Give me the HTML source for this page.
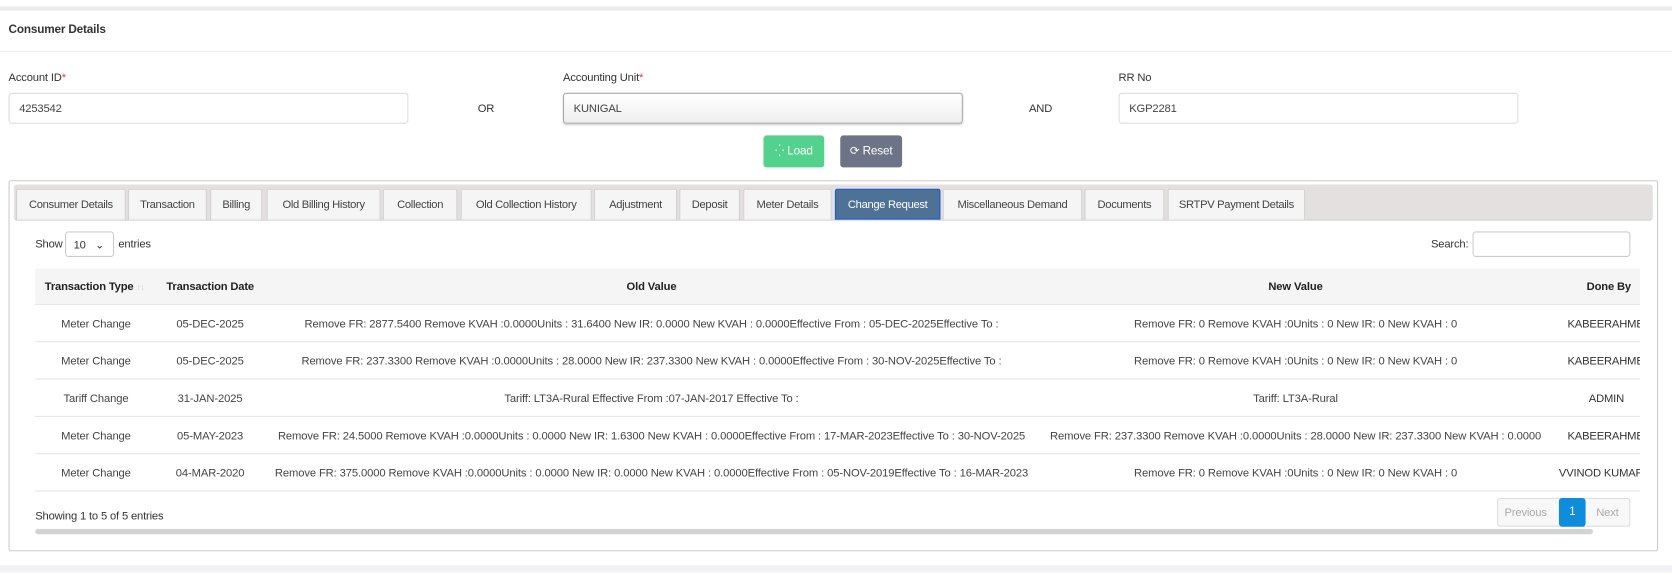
<!DOCTYPE html>
<html><head><meta charset="utf-8"><style>
*{box-sizing:border-box;margin:0;padding:0}
body{width:1672px;height:574px;background:#fff;font-family:"Liberation Sans",sans-serif;font-size:10.5px;letter-spacing:-0.15px;color:#333;position:relative;overflow:hidden}
#w{position:absolute;left:0;top:0;width:1568px;height:539px;transform:scale(1.0663);transform-origin:0 0}
.a{position:absolute;white-space:nowrap}
.inp{position:absolute;border:1px solid #ddd;border-radius:3px;height:29px;top:87px;padding:8px 9px;font-size:10.5px;color:#444}
.tab{position:absolute;top:177px;height:29px;background:#f5f5f5;border:1px solid #d0d0d0;border-bottom:none;border-radius:2px 2px 0 0;font-size:10.5px;letter-spacing:-0.3px;color:#444;text-align:center;line-height:28px}
.c{position:absolute;text-align:center;white-space:nowrap;font-size:10.5px;letter-spacing:-0.1px;color:#444}
.row{position:absolute;left:33px;width:1505px;height:35px;border-bottom:1px solid #e5e5e5}
</style></head><body><div id="w">
<div class="a" style="left:0;top:6px;width:1672px;height:4px;background:#ececec"></div>
<div class="a" style="left:8px;top:22px;font-weight:bold;font-size:11px">Consumer Details</div>
<div class="a" style="left:0;top:48px;width:1672px;height:1px;background:#ececec"></div>
<div class="a" style="left:8px;top:67px">Account ID<span style="color:#e33">*</span></div>
<div class="a" style="left:528px;top:67px">Accounting Unit<span style="color:#e33">*</span></div>
<div class="a" style="left:1049px;top:67px">RR No</div>
<div class="inp" style="left:8px;width:375px">4253542</div>
<div class="inp" style="left:528px;width:375px;border-color:#aaa;background:linear-gradient(#fff,#eee);box-shadow:0 1px 2px #ccc">KUNIGAL</div>
<div class="inp" style="left:1049px;width:375px">KGP2281</div>
<div class="a" style="left:448px;top:96px">OR</div>
<div class="a" style="left:965px;top:96px">AND</div>
<div class="a" style="left:716px;top:127px;width:57px;height:30px;background:#52d28c;border-radius:3px;color:#fff;text-align:center;line-height:30px;font-size:11px">⁛ Load</div>
<div class="a" style="left:788px;top:127px;width:58px;height:30px;background:#6e7488;border-radius:3px;color:#fff;text-align:center;line-height:30px;font-size:11px">⟳ Reset</div>
<div class="a" style="left:8px;top:169px;width:1547px;height:348px;border:1px solid #ccc;border-radius:2px"></div>
<div class="a" style="left:13px;top:173px;width:1537px;height:34px;background:#e3e0df;border-bottom:1px solid #ccc;border-radius:3px"></div>
<div class="tab" style="left:15px;width:103px">Consumer Details</div>
<div class="tab" style="left:120px;width:74px">Transaction</div>
<div class="tab" style="left:197px;width:49px">Billing</div>
<div class="tab" style="left:250px;width:107px">Old Billing History</div>
<div class="tab" style="left:359px;width:70px">Collection</div>
<div class="tab" style="left:432px;width:123px">Old Collection History</div>
<div class="tab" style="left:557px;width:78px">Adjustment</div>
<div class="tab" style="left:637px;width:57px">Deposit</div>
<div class="tab" style="left:697px;width:83px">Meter Details</div>
<div class="tab" style="left:783px;width:99px;background:#4e7196;border:1px solid #1a55e0;color:#fff">Change Request</div>
<div class="tab" style="left:884px;width:131px">Miscellaneous Demand</div>
<div class="tab" style="left:1017px;width:75px">Documents</div>
<div class="tab" style="left:1095px;width:129px">SRTPV Payment Details</div>
<div class="a" style="left:33px;top:223px">Show</div>
<div class="a" style="left:61px;top:217px;width:46px;height:24px;border:1px solid #ccc;border-radius:3px;padding:6px 7px">10 <span style="margin-left:6px">⌄</span></div>
<div class="a" style="left:111px;top:223px">entries</div>
<div class="a" style="left:1342px;top:223px">Search:</div>
<div class="a" style="left:1381px;top:217px;width:148px;height:24px;border:1px solid #ccc;border-radius:3px"></div>
<div class="a" style="left:33px;top:252px;width:1505px;height:34px;background:#f5f5f5;border-bottom:1px solid #e5e5e5"></div>
<div class="a" style="left:42px;top:263px;font-weight:bold;color:#222">Transaction Type <span style="color:#ccc;font-weight:normal;font-size:8px">↑↓</span></div>
<div class="a" style="left:156px;top:263px;font-weight:bold;color:#222">Transaction Date</div>
<div class="c" style="left:511px;width:200px;top:263px;font-weight:bold;color:#222">Old Value</div>
<div class="c" style="left:1115px;width:200px;top:263px;font-weight:bold;color:#222">New Value</div>
<div class="a" style="left:1488px;top:263px;font-weight:bold;color:#222">Done By</div>
<div class="row" style="top:286px"></div><div class="row" style="top:321px"></div><div class="row" style="top:356px"></div><div class="row" style="top:391px"></div><div class="row" style="top:426px"></div>
<div style="position:absolute;left:0;top:0;width:1538px;height:539px;overflow:hidden">
<div class="c" style="left:40px;width:100px;top:298px">Meter Change</div><div class="c" style="left:147px;width:100px;top:298px">05-DEC-2025</div>
<div class="c" style="left:211px;width:800px;top:298px">Remove FR: 2877.5400 Remove KVAH :0.0000Units : 31.6400 New IR: 0.0000 New KVAH : 0.0000Effective From : 05-DEC-2025Effective To :</div>
<div class="c" style="left:965px;width:500px;top:298px">Remove FR: 0 Remove KVAH :0Units : 0 New IR: 0 New KVAH : 0</div>
<div class="a" style="left:1470px;top:298px">KABEERAHMED</div>
<div class="c" style="left:40px;width:100px;top:333px">Meter Change</div><div class="c" style="left:147px;width:100px;top:333px">05-DEC-2025</div>
<div class="c" style="left:211px;width:800px;top:333px">Remove FR: 237.3300 Remove KVAH :0.0000Units : 28.0000 New IR: 237.3300 New KVAH : 0.0000Effective From : 30-NOV-2025Effective To :</div>
<div class="c" style="left:965px;width:500px;top:333px">Remove FR: 0 Remove KVAH :0Units : 0 New IR: 0 New KVAH : 0</div>
<div class="a" style="left:1470px;top:333px">KABEERAHMED</div>
<div class="c" style="left:40px;width:100px;top:368px">Tariff Change</div><div class="c" style="left:147px;width:100px;top:368px">31-JAN-2025</div>
<div class="c" style="left:211px;width:800px;top:368px">Tariff: LT3A-Rural Effective From :07-JAN-2017 Effective To :</div>
<div class="c" style="left:965px;width:500px;top:368px">Tariff: LT3A-Rural</div>
<div class="a" style="left:1490px;top:368px">ADMIN</div>
<div class="c" style="left:40px;width:100px;top:403px">Meter Change</div><div class="c" style="left:147px;width:100px;top:403px">05-MAY-2023</div>
<div class="c" style="left:211px;width:800px;top:403px">Remove FR: 24.5000 Remove KVAH :0.0000Units : 0.0000 New IR: 1.6300 New KVAH : 0.0000Effective From : 17-MAR-2023Effective To : 30-NOV-2025</div>
<div class="c" style="left:965px;width:500px;top:403px">Remove FR: 237.3300 Remove KVAH :0.0000Units : 28.0000 New IR: 237.3300 New KVAH : 0.0000</div>
<div class="a" style="left:1470px;top:403px">KABEERAHMED</div>
<div class="c" style="left:40px;width:100px;top:438px">Meter Change</div><div class="c" style="left:147px;width:100px;top:438px">04-MAR-2020</div>
<div class="c" style="left:211px;width:800px;top:438px">Remove FR: 375.0000 Remove KVAH :0.0000Units : 0.0000 New IR: 0.0000 New KVAH : 0.0000Effective From : 05-NOV-2019Effective To : 16-MAR-2023</div>
<div class="c" style="left:965px;width:500px;top:438px">Remove FR: 0 Remove KVAH :0Units : 0 New IR: 0 New KVAH : 0</div>
<div class="a" style="left:1462px;top:438px">VVINOD KUMAR</div>
</div>
<div class="a" style="left:33px;top:478px">Showing 1 to 5 of 5 entries</div>
<div class="a" style="left:1404px;top:467px;width:125px;height:27px;border:1px solid #ddd;border-radius:3px;background:#f8f8f8"></div>
<div class="a" style="left:1411px;top:475px;color:#aaa">Previous</div>
<div class="a" style="left:1462px;top:467px;width:25px;height:27px;background:#0d8ddb;border-radius:3px;color:#fff;text-align:center;line-height:27px;font-size:11px">1</div>
<div class="a" style="left:1497px;top:475px;color:#aaa">Next</div>
<div class="a" style="left:33px;top:496px;width:1461px;height:5px;background:#d3d3d3;border-radius:3px"></div>
<div class="a" style="left:0;top:530px;width:1672px;height:7px;background:#f3f3f5"></div>
</div></body></html>
